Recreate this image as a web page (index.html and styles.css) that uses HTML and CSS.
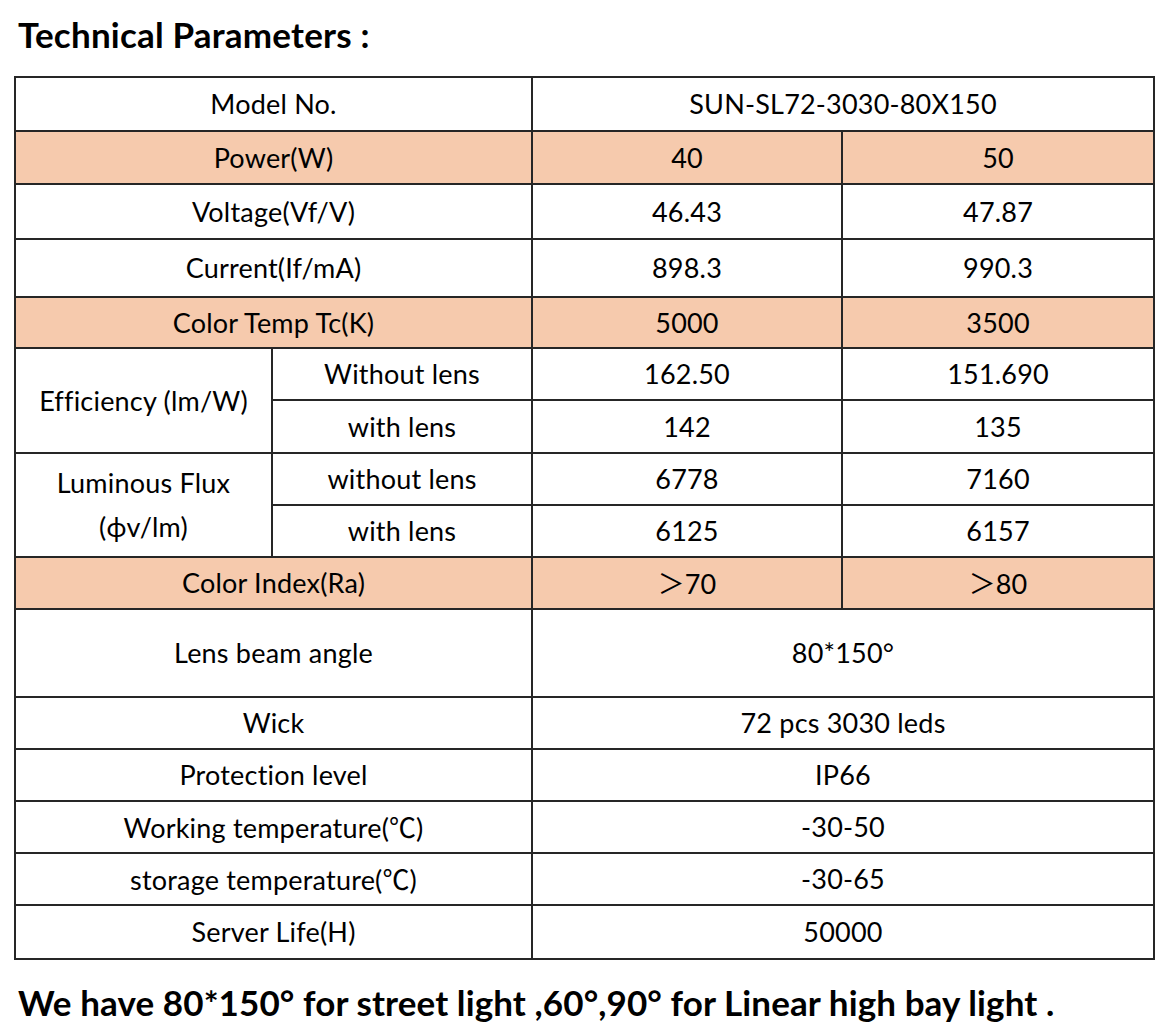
FILE: index.html
```html
<!DOCTYPE html>
<html>
<head>
<meta charset="utf-8">
<link rel="stylesheet" href="styles.css">
</head>
<body>
<h1 class="title">Technical Parameters :</h1>
<table class="spec">
  <colgroup>
    <col class="c1"><col class="c2"><col class="c3"><col class="c4">
  </colgroup>
  <tr class="h54"><td colspan="2">Model No.</td><td colspan="2">SUN-SL72-3030-80X150</td></tr>
  <tr class="h53 hl"><td colspan="2">Power(W)</td><td>40</td><td>50</td></tr>
  <tr class="h55"><td colspan="2">Voltage(Vf/V)</td><td>46.43</td><td>47.87</td></tr>
  <tr class="h58"><td colspan="2">Current(If/mA)</td><td>898.3</td><td>990.3</td></tr>
  <tr class="h51 hl"><td colspan="2">Color Temp Tc(K)</td><td>5000</td><td>3500</td></tr>
  <tr class="h52"><td rowspan="2">Efficiency (lm/W)</td><td>Without lens</td><td>162.50</td><td>151.690</td></tr>
  <tr class="h53"><td>with lens</td><td>142</td><td>135</td></tr>
  <tr class="h52"><td rowspan="2" class="two">Luminous Flux<br>(ϕv/lm)</td><td>without lens</td><td>6778</td><td>7160</td></tr>
  <tr class="h52"><td>with lens</td><td>6125</td><td>6157</td></tr>
  <tr class="h52 hl"><td colspan="2">Color Index(Ra)</td><td><span class="cjk">＞</span>70</td><td><span class="cjk">＞</span>80</td></tr>
  <tr class="h88"><td colspan="2">Lens beam angle</td><td colspan="2">80*150°</td></tr>
  <tr class="h52"><td colspan="2">Wick</td><td colspan="2">72 pcs 3030 leds</td></tr>
  <tr class="h52"><td colspan="2">Protection level</td><td colspan="2">IP66</td></tr>
  <tr class="h52"><td colspan="2">Working temperature(<span class="cjk">℃</span>)</td><td colspan="2">-30-50</td></tr>
  <tr class="h52"><td colspan="2">storage temperature(<span class="cjk">℃</span>)</td><td colspan="2">-30-65</td></tr>
  <tr class="h54"><td colspan="2">Server Life(H)</td><td colspan="2">50000</td></tr>
</table>
<p class="note">We have 80*150° for street light ,60°,90° for Linear high bay light .</p>
</body>
</html>
```
FILE: styles.css
```css
html, body {
  margin: 0;
  padding: 0;
  background: #ffffff;
}
body {
  font-family: Lato, "Open Sans", sans-serif;
  color: #000;
}
.title {
  margin: 0;
  padding: 14px 0 0 18px;
  height: 76px;
  box-sizing: border-box;
  font-size: 35px;
  font-weight: 700;
  line-height: 40px;
  letter-spacing: 0.2px;
}
.spec {
  margin-left: 14px;
  width: 1139px;
  border-collapse: collapse;
  table-layout: fixed;
  font-size: 27px;
  letter-spacing: 0.2px;
}
.c1 { width: 257px; }
.c2 { width: 260px; }
.c3 { width: 310px; }
.c4 { width: 312px; }
.spec td {
  border: 2px solid #262626;
  text-align: center;
  vertical-align: middle;
  padding: 0;
  line-height: 30px;
}
.spec td.two { line-height: 44px; }
.hl td { background: #f6caad; }
.h51 { height: 51px; }
.h52 { height: 52px; }
.h53 { height: 53px; }
.h54 { height: 54px; }
.h55 { height: 55px; }
.h58 { height: 58px; }
.h88 { height: 88px; }
.cjk {
  font-family: "Noto Sans CJK SC", sans-serif;
  font-weight: 400;
  letter-spacing: 0;
}
.note {
  margin: 22px 0 0 18px;
  font-size: 35px;
  font-weight: 700;
  line-height: 40px;
  letter-spacing: 0.1px;
  white-space: nowrap;
}
```
